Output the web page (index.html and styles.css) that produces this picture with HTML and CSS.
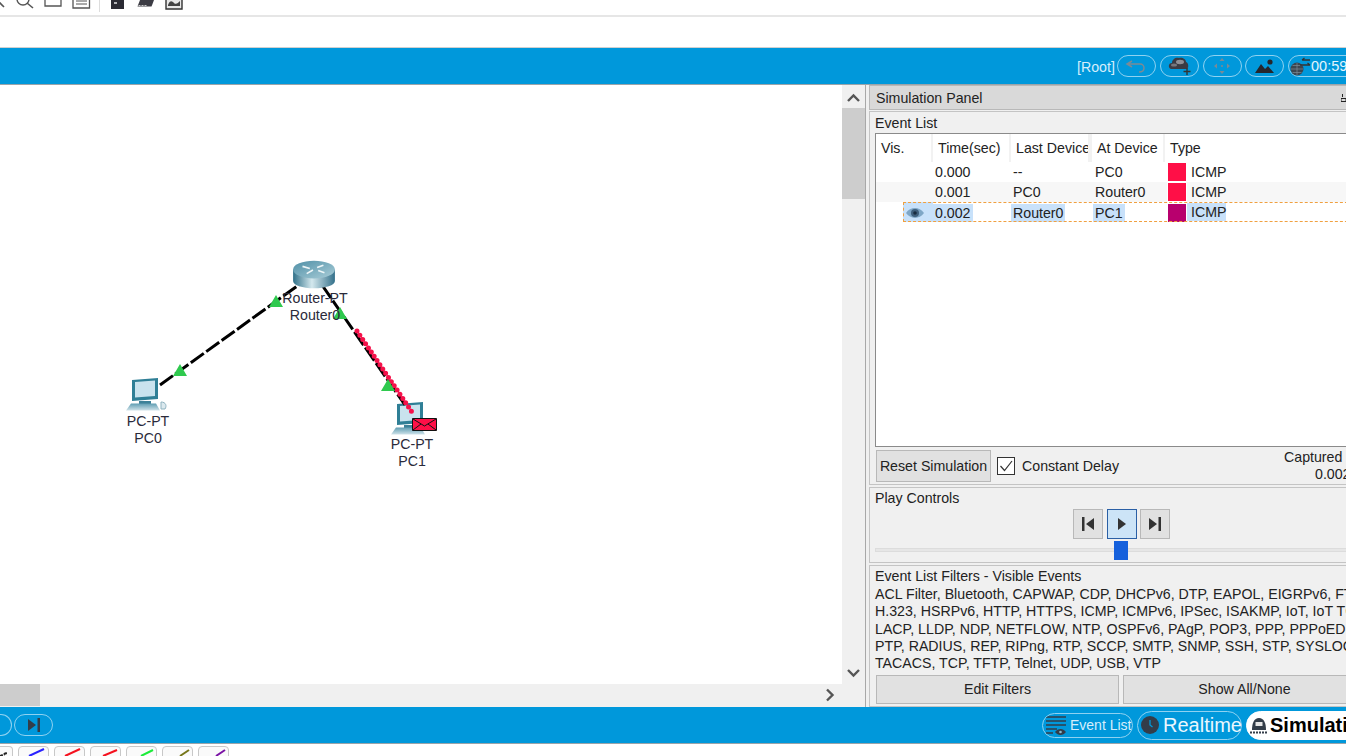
FILE: index.html
```html
<!DOCTYPE html>
<html lang="en">
<head>
<meta charset="utf-8">
<title>Simulation</title>
<link rel="stylesheet" href="styles.css">
</head>
<body>
<div class="app">
  <div class="toolbar">
    <svg class="tool-strip" width="190" height="15" viewBox="0 0 190 15">
      <path d="M-1 2 4 7" stroke="#555" stroke-width="1.6" fill="none"/>
      <circle cx="23" cy="-1" r="6" stroke="#555" stroke-width="1.4" fill="none"/>
      <path d="M27 3l6 5" stroke="#555" stroke-width="1.6" fill="none"/>
      <path d="M45-2v8h16v-8" stroke="#555" stroke-width="1.3" fill="#fff"/>
      <path d="M73-2v10h16.500v-10" stroke="#555" stroke-width="1.300" fill="#fff"/>
      <path d="M76 1h11M76 4h11" stroke="#555" stroke-width="1"/>
      <path d="M99.500 0v12" stroke="#ddd"/>
      <path d="M111-1h13v10h-13z" fill="#2b2b33"/>
      <path d="M114 3h3" stroke="#fff" stroke-width="1.300"/>
      <path d="M140 0h14l-1.500 4-1 2.500h-14z" fill="#3c3c44"/>
      <path d="M138.500 5.500h2m1 0h2m1 0h2" stroke="#ccc"/>
      <path d="M166-1h16v10h-16z" fill="#e8e8e8" stroke="#333" stroke-width="1.400"/>
      <path d="M168 5c2-5 4-4 6-2s4 0 6-2v5h-12z" fill="#444"/>
    </svg>
  </div>
  <div class="blank-row"></div>
  <div class="bar bar-top">
    <span class="root-label">[Root]</span>
    <span class="pill"><svg width="26" height="16" viewBox="0 0 26 16"><path d="M8 3 3 6l5 3M3 6h13c5 0 6 8-1 8" fill="none" stroke="#7b8a95" stroke-width="1.500"/></svg></span>
    <span class="pill"><svg width="26" height="20" viewBox="0 0 26 20"><path d="M5 13c-3-1-3-6 1-6 0-4 4-6 7-5 3-1 7 1 7 4 3 1 3 7 0 7z" fill="#3b3b44"/><ellipse cx="14" cy="6" rx="4" ry="2.200" fill="#8f8f96"/><ellipse cx="8" cy="9" rx="3" ry="1.600" fill="#77777e"/><path d="M21 12v7M17.500 15.500h7" stroke="#333" stroke-width="1.400"/></svg></span>
    <span class="pill"><svg width="24" height="18" viewBox="0 0 24 18"><g fill="#7b8a95"><path d="M12 1l2.500 3h-5zM12 17l2.500-3h-5zM4 9l3-2.500v5zM20 9l-3-2.500v5z"/><circle cx="12" cy="9" r="1"/></g></svg></span>
    <span class="pill"><svg width="26" height="18" viewBox="0 0 26 18"><path d="M3 16l6-9 4 5 3-3 6 7z" fill="#26262c"/><circle cx="18" cy="5" r="2.600" fill="#26262c"/></svg></span>
    <span class="pill pill-time"><svg width="22" height="22" viewBox="0 0 22 22"><circle cx="8" cy="14" r="6.500" fill="#3c4650"/><path d="M2 14h12M8 8v12M3.500 10.500h9M3.500 17.500h9" stroke="#7d8b96" stroke-width=".7"/><path d="M13 5h8M13 5l2.500-2M11 10h10M21 10l-2.500-2" stroke="#333" stroke-width="1.300" fill="none"/></svg><span>00:59</span></span>
  </div>

  <main class="main">
    <section class="workspace">
      <div class="canvas">
        <div class="node node-pc0">
          <svg width="42" height="34" viewBox="0 0 42 34">
            <defs>
              <linearGradient id="kbd" x1="0" x2="0" y1="0" y2="1"><stop offset="0" stop-color="#5f9db2"/><stop offset="1" stop-color="#cfe2e9"/></linearGradient>
            </defs>
            <path d="M6 2 32 0v21l-26 2z" fill="#2f7f96"/>
            <path d="M9 4l20-1.500V18L9 19.500z" fill="#c9e3ee"/>
            <path d="M13 23h12v3H13z" fill="#3c8198"/>
            <path d="M5 25.500h25l4 7H0z" fill="url(#kbd)"/>
            <path d="M35 24c5 0 6 4 4 7h-4z" fill="#dce9ee" stroke="#8fb3c0"/>
          </svg>
          <span class="node-label">PC-PT<br>PC0</span>
        </div>
        <div class="node node-pc1">
          <svg width="42" height="34" viewBox="0 0 42 34">
            <path d="M6 2 32 0v21l-26 2z" fill="#2f7f96"/>
            <path d="M9 4l20-1.500V18L9 19.500z" fill="#c9e3ee"/>
            <path d="M13 23h12v3H13z" fill="#3c8198"/>
            <path d="M5 25.500h25l4 7H0z" fill="url(#kbd)"/>
          </svg>
          <span class="node-label">PC-PT<br>PC1</span>
        </div>
        <svg class="links" width="842" height="599" viewBox="0 85 842 599">
          <path class="link" d="M160 385 300 284"/>
          <path class="link" d="M322 285 405 405"/>
          <path class="packet-trail" d="M357 331 414 415"/>
          <path class="light" d="M180 364l7 12h-14zM276 295l7 12h-14zM340 307l7 12h-14zM388 379l7 12h-14z"/>
        </svg>
        <div class="node node-router">
          <svg width="46" height="32" viewBox="0 0 44 30.500">
            <defs>
              <linearGradient id="rside" x1="0" x2="1" y1="0" y2="0"><stop offset="0" stop-color="#2f7088"/><stop offset=".45" stop-color="#d4e8ee"/><stop offset="1" stop-color="#33708a"/></linearGradient>
              <linearGradient id="rtop" x1="0" x2="1" y1="0" y2="1"><stop offset="0" stop-color="#4f8fa6"/><stop offset="1" stop-color="#a9cdd8"/></linearGradient>
            </defs>
            <path d="M2 10v11c0 4 9 7 20 7s20-3 20-7V10z" fill="url(#rside)"/>
            <ellipse cx="22" cy="10" rx="20" ry="8.500" fill="url(#rtop)"/>
            <path d="M11 7l7 2M15 14l6-3.500M25 8l6-2M26 11l6 2" stroke="#eef6f8" stroke-width="1.500"/>
          </svg>
          <span class="node-label node-label-router">Router-PT<br>Router0</span>
        </div>
        <svg class="envelope" width="25" height="13" viewBox="0 0 25 13">
          <path d="M.500.500h24v12H.500z" fill="#ff0f47" stroke="#111"/>
          <path d="M1 1l11.500 7L24 1M1 12l8-6M24 12l-8-6" fill="none" stroke="#111"/>
        </svg>
      </div>
      <div class="vscroll">
        <svg class="arrow-btn" width="23" height="23" viewBox="0 0 23 23"><path d="M6 16l5.500-5.500L17 16" fill="none" stroke="#555" stroke-width="2.400"/></svg>
        <div class="vthumb"></div>
        <div class="fill"></div>
        <svg class="arrow-btn" width="23" height="23" viewBox="0 0 23 23"><path d="M6 9l5.500 5.500L17 9" fill="none" stroke="#555" stroke-width="2.400"/></svg>
      </div>
      <div class="hscroll">
        <div class="hthumb"></div>
        <div class="fill"></div>
        <svg class="arrow-btn" width="23" height="22" viewBox="0 0 23 22"><path d="M8 5.500l5.500 5.500L8 16.500" fill="none" stroke="#555" stroke-width="2.400"/></svg>
      </div>
    </section>

    <aside class="panel">
      <div class="panel-title">
        <span>Simulation Panel</span>
        <svg width="5" height="9" viewBox="0 0 5 9"><path d="M1.500 1v3M0 5.500h5v3H0z" fill="none" stroke="#222"/></svg>
      </div>

      <section class="group group-events">
        <div class="group-title">Event List</div>
        <div class="table">
          <div class="row row-head">
            <span class="cell c-vis">Vis.</span>
            <span class="cell c-time">Time(sec)</span>
            <span class="cell c-last">Last Device</span>
            <span class="cell c-at">At Device</span>
            <span class="cell c-type">Type</span>
          </div>
          <div class="row">
            <span class="cell c-vis"></span>
            <span class="cell c-time"><span class="val">0.000</span></span>
            <span class="cell c-last"><span class="val">--</span></span>
            <span class="cell c-at"><span class="val">PC0</span></span>
            <span class="cell c-type"><i class="swatch swatch-red"></i><span class="val">ICMP</span></span>
          </div>
          <div class="row row-alt">
            <span class="cell c-vis"></span>
            <span class="cell c-time"><span class="val">0.001</span></span>
            <span class="cell c-last"><span class="val">PC0</span></span>
            <span class="cell c-at"><span class="val">Router0</span></span>
            <span class="cell c-type"><i class="swatch swatch-red"></i><span class="val">ICMP</span></span>
          </div>
          <div class="row row-current">
            <span class="cell c-vis">
              <svg class="eye" width="20" height="12" viewBox="0 0 20 12"><path d="M1 6c4-6 13-7 18 0-5 7-14 6-18 0z" fill="#7ea6c6"/><circle cx="10" cy="6" r="4" fill="#3f5f7c"/><circle cx="10" cy="6" r="1.800" fill="#182c40"/></svg>
            </span>
            <span class="cell c-time"><span class="val sel">0.002</span></span>
            <span class="cell c-last"><span class="val sel">Router0</span></span>
            <span class="cell c-at"><span class="val sel">PC1</span></span>
            <span class="cell c-type"><i class="swatch swatch-purple"></i><span class="val sel">ICMP</span></span>
          </div>
        </div>
        <div class="event-foot">
          <button class="btn btn-reset">Reset Simulation</button>
          <span class="check"><svg width="14" height="12" viewBox="0 0 14 12"><path d="M1.500 6l4 4.500L13 1" fill="none" stroke="#333" stroke-width="1.200"/></svg></span>
          <span class="check-label">Constant Delay</span>
          <span class="captured">Captured<br><span class="captured-val">0.002</span></span>
        </div>
      </section>

      <section class="group group-play">
        <div class="group-title">Play Controls</div>
        <div class="play-buttons">
          <button class="play-btn"><svg width="14" height="14" viewBox="0 0 14 14"><path d="M1 0h2.500v14H1zM13 1v12L5 7z" fill="#333"/></svg></button>
          <button class="play-btn play-active"><svg width="10" height="12" viewBox="0 0 10 12"><path d="M1 0v12l8-6z" fill="#333"/></svg></button>
          <button class="play-btn"><svg width="14" height="14" viewBox="0 0 14 14"><path d="M13 0h-2.500v14H13zM1 1v12l8-6z" fill="#333"/></svg></button>
        </div>
        <div class="slider"><span class="slider-thumb"></span></div>
      </section>

      <section class="group group-filters">
        <div class="group-title">Event List Filters - Visible Events</div>
        <div class="filter-text">
          <div>ACL Filter, Bluetooth, CAPWAP, CDP, DHCPv6, DTP, EAPOL, EIGRPv6, FTP,</div>
          <div>H.323, HSRPv6, HTTP, HTTPS, ICMP, ICMPv6, IPSec, ISAKMP, IoT, IoT TCP,</div>
          <div>LACP, LLDP, NDP, NETFLOW, NTP, OSPFv6, PAgP, POP3, PPP, PPPoED,</div>
          <div>PTP, RADIUS, REP, RIPng, RTP, SCCP, SMTP, SNMP, SSH, STP, SYSLOG,</div>
          <div>TACACS, TCP, TFTP, Telnet, UDP, USB, VTP</div>
        </div>
        <div class="filter-buttons">
          <button class="btn btn-edit">Edit Filters</button>
          <button class="btn btn-show">Show All/None</button>
        </div>
      </section>
    </aside>
  </main>

  <div class="bar bar-bottom">
    <div class="transport">
      <span class="pill pill-cut"></span>
      <span class="pill"><svg width="14" height="14" viewBox="0 0 14 14"><path d="M1 1v12l8-6z" fill="#333d49"/><path d="M10.500 0H13v14h-2.500z" fill="#333d49"/></svg></span>
    </div>
    <div class="modes">
      <span class="pill pill-list">
        <svg width="23" height="23" viewBox="0 0 23 23"><path d="M2 3h20M2 7h20M2 11h20M2 15h11M2 19h7" stroke="#333d49" stroke-width="1.500"/><path d="M11 18c3-4 8-4 11 0-3 4-8 4-11 0z" fill="#333d49"/><circle cx="16.500" cy="18" r="1.300" fill="#8bc"/></svg>
        <span>Event List</span>
      </span>
      <span class="pill pill-real">
        <svg width="20" height="20" viewBox="0 0 20 20"><circle cx="10" cy="10" r="9" fill="#333d49"/><path d="M10 5v5l2.500 2" stroke="#0098db" stroke-width="1.300" fill="none"/></svg>
        <span>Realtime</span>
      </span>
      <span class="pill pill-sim">
        <svg width="20" height="20" viewBox="0 0 20 20"><path d="M3 15c0-7 2-12 7-12s7 5 7 12z" fill="#333d49"/><path d="M6.500 7h7v4h-7z" fill="#e6e6e6"/><path d="M1 17.500h2m1 0h2m1 0h2m1 0h2m1 0h2m1 0h2" stroke="#333d49" stroke-width="2"/></svg>
        <span>Simulation</span>
      </span>
    </div>
  </div>

  <div class="device-row">
    <span class="dev-tab dev-cut"><svg width="13" height="10" viewBox="0 0 13 10"><path d="M0 9l5-2M4 7l3-1" stroke="#222" stroke-width="2" stroke-dasharray="3 1"/></svg></span>
    <span class="dev-tab"><svg width="31" height="10" viewBox="0 0 31 10"><path d="M10 9l15-7" stroke="#2a22ff" stroke-width="2"/></svg></span>
    <span class="dev-tab"><svg width="31" height="10" viewBox="0 0 31 10"><path d="M10 9l15-7" stroke="#f5111e" stroke-width="2"/></svg></span>
    <span class="dev-tab"><svg width="31" height="10" viewBox="0 0 31 10"><path d="M12 9l14-6" stroke="#f5111e" stroke-width="2"/></svg></span>
    <span class="dev-tab"><svg width="31" height="10" viewBox="0 0 31 10"><path d="M14 9l12-6" stroke="#1cec3a" stroke-width="2"/></svg></span>
    <span class="dev-tab"><svg width="31" height="10" viewBox="0 0 31 10"><path d="M17 9l9-6" stroke="#77771a" stroke-width="2"/></svg></span>
    <span class="dev-tab"><svg width="31" height="10" viewBox="0 0 31 10"><path d="M17 9l9-6" stroke="#7a12a5" stroke-width="2"/></svg></span>
  </div>
</div>
</body>
</html>
```
FILE: styles.css
```css
* { box-sizing: border-box; }
html, body { margin: 0; padding: 0; height: 100%; overflow: hidden; background: #fff; }
body { font-family: "Liberation Sans", Arial, sans-serif; font-size: 14.2px; color: #222; }
button { font: inherit; color: inherit; padding: 0; margin: 0; }
svg { flex: none; }

.app { width: 1346px; height: 756px; overflow: hidden; display: flex; flex-direction: column; }

.toolbar { height: 17px; flex: none; border-bottom: 2px solid #e6e6e6; }
.tool-strip { display: block; }
.blank-row { height: 31px; flex: none; border-bottom: 1px solid #d0d0d0; }

.bar { background: #0098db; flex: none; display: flex; align-items: center; white-space: nowrap; }
.bar-top { height: 37px; border-bottom: 1px solid #9aa4aa; padding: 0 0 0 1077px; gap: 3.750px; }
.bar-bottom { height: 37px; border-bottom: 1px solid #9aa4aa; justify-content: space-between; }

.root-label { color: #d5eefb; width: 36.250px; margin-top: 2px; }
.pill { flex: none; display: flex; align-items: center; justify-content: center; width: 39px; height: 22px; border: 1.500px solid #8fd2f1; border-radius: 11px; }
.pill-time { width: 70px; justify-content: flex-start; gap: 0; color: #e4f5fd; font-size: 14.500px; }

.main { height: 622px; flex: none; display: flex; }

.workspace { width: 866px; flex: none; display: grid; grid-template-columns: 842px 23px; grid-template-rows: 599px 23px; border-right: 1px solid #a8a8a8; background: #f0f0f0; }
.canvas { position: relative; overflow: hidden; background: #fff; }
.links { position: absolute; left: 0; top: 0; }
.link { stroke: #000; stroke-width: 3px; stroke-dasharray: 16 3; fill: none; }
.packet-trail { stroke: #f5114a; stroke-width: 5px; stroke-linecap: round; stroke-dasharray: 0 5.100; fill: none; }
.light { fill: #2fc94e; }

.node { position: absolute; display: flex; flex-direction: column; align-items: center; width: 80px; }
.node-label { display: block; text-align: center; line-height: 16.500px; color: #2a2a3a; }
.node-router { left: 275px; top: 174px; }
.node-router svg { margin-left: -2px; }
.node-label-router { margin-top: -1px; }
.node-pc0 { left: 107px; top: 293px; }
.node-pc0 .node-label { margin-top: 1px; padding-left: 2px; }
.node-pc1 { left: 372px; top: 317px; }
.envelope { position: absolute; left: 412px; top: 333px; }

.vscroll { background: #f0f0f0; display: flex; flex-direction: column; grid-column: 2; grid-row: 1; }
.vthumb { height: 91px; background: #cdcdcd; flex: none; }
.hscroll { background: #f0f0f0; display: flex; height: 23px; grid-column: 1; grid-row: 2; }
.hthumb { width: 40px; background: #cdcdcd; flex: none; height: 22px; }
.fill { flex: 1; }
.arrow-btn { display: block; flex: none; }

.panel { flex: 1; min-width: 0; overflow: hidden; background: #f0f0f0; padding-left: 3px; }
.panel-title { height: 25px; background: #d9d9d9; border: 1px solid #b8b8b8; border-right: 0; padding: 0 0 0 6px; display: flex; align-items: center; justify-content: space-between; color: #222; }

.group { border: 1px solid #c4c4c4; border-right: 0; width: 500px; }
.group-title { line-height: 16px; padding-left: 5px; white-space: nowrap; }

.group-events { height: 374px; padding-top: 3px; margin-top: 1px; }
.table { margin: 2px 0 0 5px; height: 314px; border: 1px solid #8a8a8a; background: #fff; }
.row { display: flex; height: 20px; line-height: 20px; white-space: nowrap; }
.row-head { height: 28px; line-height: 28px; }
.row-head .cell { border-right: 2px solid #f2f2f2; padding-left: 5px; overflow: hidden; }
.row-head .c-last { border-right-width: 4px; }
.row-head .c-vis { width: 57px; }
.row-alt { background: #f7f7f7; }
.row-current { outline: 1px dashed #f0a040; outline-offset: -1px; margin-left: 27px; }
.cell { flex: none; display: block; height: 100%; padding-left: 2px; }
.c-vis { width: 57px; }
.c-time { width: 78px; }
.c-last { width: 81px; }
.c-at { width: 73px; padding-left: 3px; }
.c-type { width: 200px; display: flex; padding-left: 1.500px; }
.row-head .c-type { display: block; }
.row-current .c-vis { width: 30px; padding-left: 2px; background: #c8e1fa; }
.eye { display: block; margin-top: 4px; background: #c8e1fa; }
.row-current .cell { padding-top: 1px; }
.row-current .c-time { padding-left: 0; }
.row-current .c-time .sel { padding: 0 3px 0 2px; display: inline-block; width: 40px; }
.sel { background: #c8e1fa; display: inline-block; height: 18px; line-height: 18px; }
.c-last .sel, .c-at .sel { margin-left: -2px; padding: 0 2px; }
.swatch { display: block; width: 20px; height: 20px; border: 1px solid #fff; flex: none; }
.swatch-red { background: #ff0f47; }
.swatch-purple { background: #b8006e; }
.c-type .val { padding-left: 4.500px; }

.event-foot { display: flex; align-items: center; height: 37px; padding-left: 6px; position: relative; }
.btn { background: #e1e1e1; border: 1px solid #b8b8b8; color: #222; }
.btn-reset { width: 115px; height: 32px; flex: none; }
.check { width: 18px; height: 18px; margin-left: 6px; border: 1px solid #333; background: #fff; display: flex; align-items: center; justify-content: center; flex: none; }
.check-label { margin-left: 7px; }
.captured { position: absolute; left: 414px; top: 2px; line-height: 17px; }
.captured-val { margin-left: 31px; }

.group-play { height: 76px; margin-top: 2px; padding-top: 2px; }
.play-buttons { display: flex; gap: 4px; margin: 3px 0 0 203px; height: 30px; }
.play-btn { width: 30px; height: 30px; background: #e1e1e1; border: 1px solid #b8b8b8; display: flex; align-items: center; justify-content: center; }
.play-btn + .play-btn + .play-btn { margin-left: -1px; }
.play-active { background: #cce4f7; border-color: #2a5fa5; }
.slider { height: 4px; margin: 9px 0 0 5px; background: #e6e6e6; position: relative; border: 1px solid #dcdcdc; }
.slider-thumb { position: absolute; left: 238px; top: -8px; width: 14px; height: 19px; background: #1560dc; }

.group-filters { height: 142px; margin-top: 2px; padding-top: 2px; }
.filter-text { padding-left: 5px; white-space: nowrap; line-height: 17.300px; margin-top: 2px; }
.filter-buttons { display: flex; gap: 4px; padding-left: 6px; margin-top: 2.400px; }
.btn-edit { width: 243px; height: 29px; flex: none; }
.btn-show { width: 243px; height: 29px; flex: none; }

.transport { display: flex; gap: 2px; }
.pill-cut { width: 12px; border-left: 0; border-radius: 0 11px 11px 0; }
.modes { display: flex; gap: 4px; width: 304px; overflow: hidden; flex: none; align-items: center; }
.pill-list { width: 91px; height: 25px; border-radius: 13px; color: #d5eefb; gap: 3px; border-width: 1px; justify-content: flex-start; padding-left: 1px; font-size: 14px; overflow: hidden; }
.pill-real { width: 105px; height: 29px; border-radius: 15px; color: #eaf7fe; font-size: 20px; gap: 3px; justify-content: flex-start; padding-left: 2px; }
.pill-sim { width: 120px; height: 29px; border-radius: 15px; background: #fff; color: #000; font-weight: bold; font-size: 20px; gap: 1px; border-color: #fff; justify-content: flex-start; padding-left: 2px; }

.device-row { flex: 1; display: flex; gap: 5px; padding-top: 2px; background: #fff; overflow: hidden; }
.dev-tab { width: 31px; height: 14px; border: 1px solid #c8c8c8; border-radius: 4px 4px 0 0; flex: none; background: #fafafa; overflow: hidden; }
.dev-tab svg { display: block; }
.dev-cut { width: 13px; border-left: 0; border-radius: 0 4px 0 0; }
```
